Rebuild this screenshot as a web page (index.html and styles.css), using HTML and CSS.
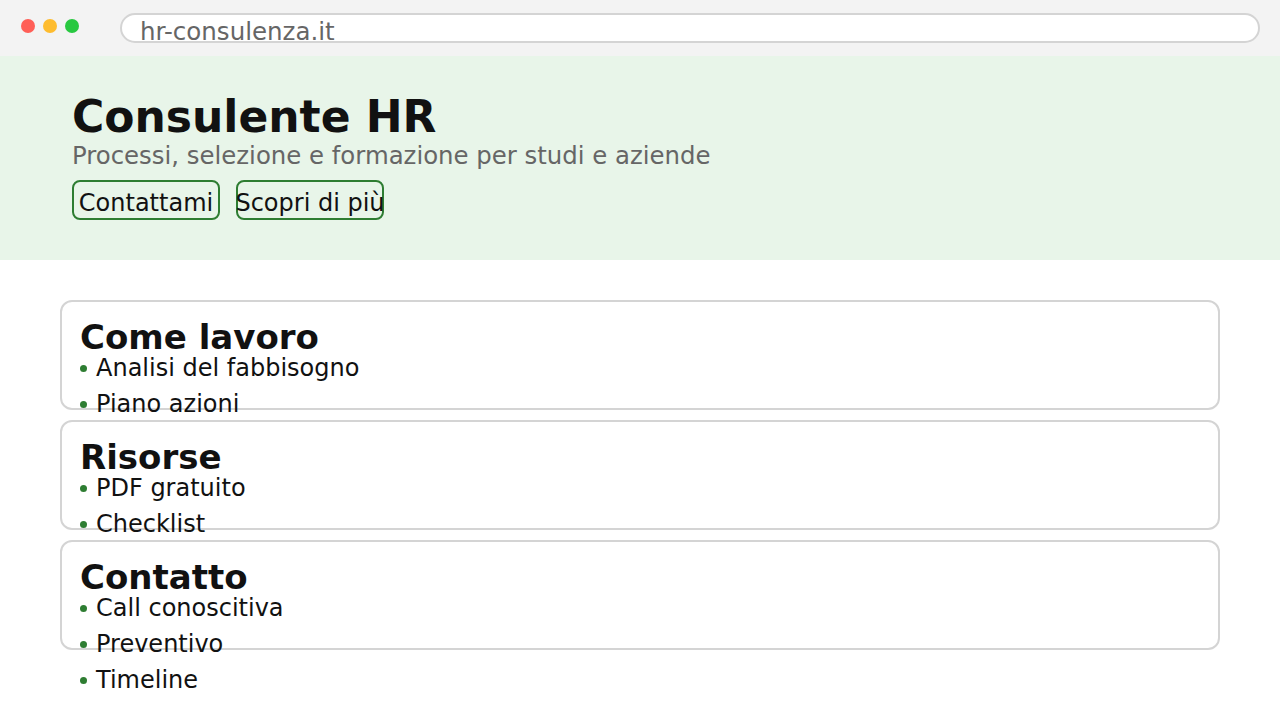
FILE: index.html
```html
<!DOCTYPE html>
<html lang="it">
<head>
<meta charset="utf-8">
<title>Consulente HR</title>
<link rel="stylesheet" href="styles.css">
</head>
<body>
<div class="browser-bar">
  <div class="dots">
    <span class="dot dot-red"></span>
    <span class="dot dot-yellow"></span>
    <span class="dot dot-green"></span>
  </div>
  <div class="url">hr-consulenza.it</div>
</div>
<header class="hero">
  <h1 class="hero-title">Consulente HR</h1>
  <p class="hero-sub">Processi, selezione e formazione per studi e aziende</p>
  <div class="actions">
    <button class="btn">Contattami</button>
    <button class="btn">Scopri di più</button>
  </div>
</header>
<main class="content">
  <section class="card">
    <h2 class="card-title">Come lavoro</h2>
    <ul class="list">
      <li class="item"><span class="bullet"></span>Analisi del fabbisogno</li>
      <li class="item"><span class="bullet"></span>Piano azioni</li>
    </ul>
  </section>
  <section class="card">
    <h2 class="card-title">Risorse</h2>
    <ul class="list">
      <li class="item"><span class="bullet"></span>PDF gratuito</li>
      <li class="item"><span class="bullet"></span>Checklist</li>
    </ul>
  </section>
  <section class="card">
    <h2 class="card-title">Contatto</h2>
    <ul class="list">
      <li class="item"><span class="bullet"></span>Call conoscitiva</li>
      <li class="item"><span class="bullet"></span>Preventivo</li>
      <li class="item"><span class="bullet"></span>Timeline</li>
    </ul>
  </section>
</main>
</body>
</html>
```
FILE: styles.css
```css
* { box-sizing: border-box; }
html, body { margin: 0; padding: 0; }
body {
  font-family: "DejaVu Sans", sans-serif;
  font-size: 24px;
  color: #111;
  background: #fff;
  width: 1280px;
  height: 720px;
  overflow: hidden;
}
.browser-bar {
  height: 56px;
  background: #f3f3f3;
  display: flex;
  align-items: flex-start;
  padding: 0 20px 0 21px;
}
.dots {
  display: flex;
  gap: 8px;
  margin-top: 19px;
}
.dot {
  width: 14px;
  height: 14px;
  border-radius: 50%;
  display: block;
}
.dot-red { background: #ff5f57; }
.dot-yellow { background: #febc2e; }
.dot-green { background: #28c840; }
.url {
  margin-top: 13px;
  margin-left: 41px;
  flex: 1;
  height: 30px;
  background: #fff;
  border: 2px solid #d4d4d4;
  border-radius: 15px;
  padding: 0 18px;
  font-size: 24.5px;
  line-height: 34px;
  color: #666;
  white-space: nowrap;
}
.hero {
  background: #e8f5e9;
  padding: 36px 72px 40px;
}
.hero-title {
  margin: 0;
  font-size: 44px;
  line-height: 49px;
  font-weight: bold;
  color: #111;
}
.hero-sub {
  margin: 0;
  font-size: 24.4px;
  line-height: 30px;
  color: #666;
}
.actions {
  display: flex;
  gap: 16px;
  margin-top: 9px;
}
.btn {
  width: 148px;
  height: 40px;
  border: 2px solid #2e7d32;
  border-radius: 8px;
  background: transparent;
  font-family: "DejaVu Sans", sans-serif;
  font-size: 24px;
  color: #111;
  padding: 6px 0 0;
  display: flex;
  align-items: center;
  justify-content: center;
  white-space: nowrap;
}
.content {
  padding: 40px 60px;
  display: flex;
  flex-direction: column;
  gap: 10px;
}
.card {
  height: 110px;
  border: 2px solid #d4d4d4;
  border-radius: 12px;
  padding: 18px 18px 16px;
  overflow: visible;
}
.card-title {
  margin: 0;
  font-size: 34px;
  line-height: 34px;
  font-weight: bold;
  color: #111;
}
.list {
  list-style: none;
  margin: 0;
  padding: 0;
}
.item {
  display: flex;
  align-items: center;
  gap: 9px;
  line-height: 28px;
  margin-bottom: 8px;
}
.bullet {
  width: 7px;
  height: 7px;
  border-radius: 50%;
  background: #2e7d32;
  flex: none;
}
```
